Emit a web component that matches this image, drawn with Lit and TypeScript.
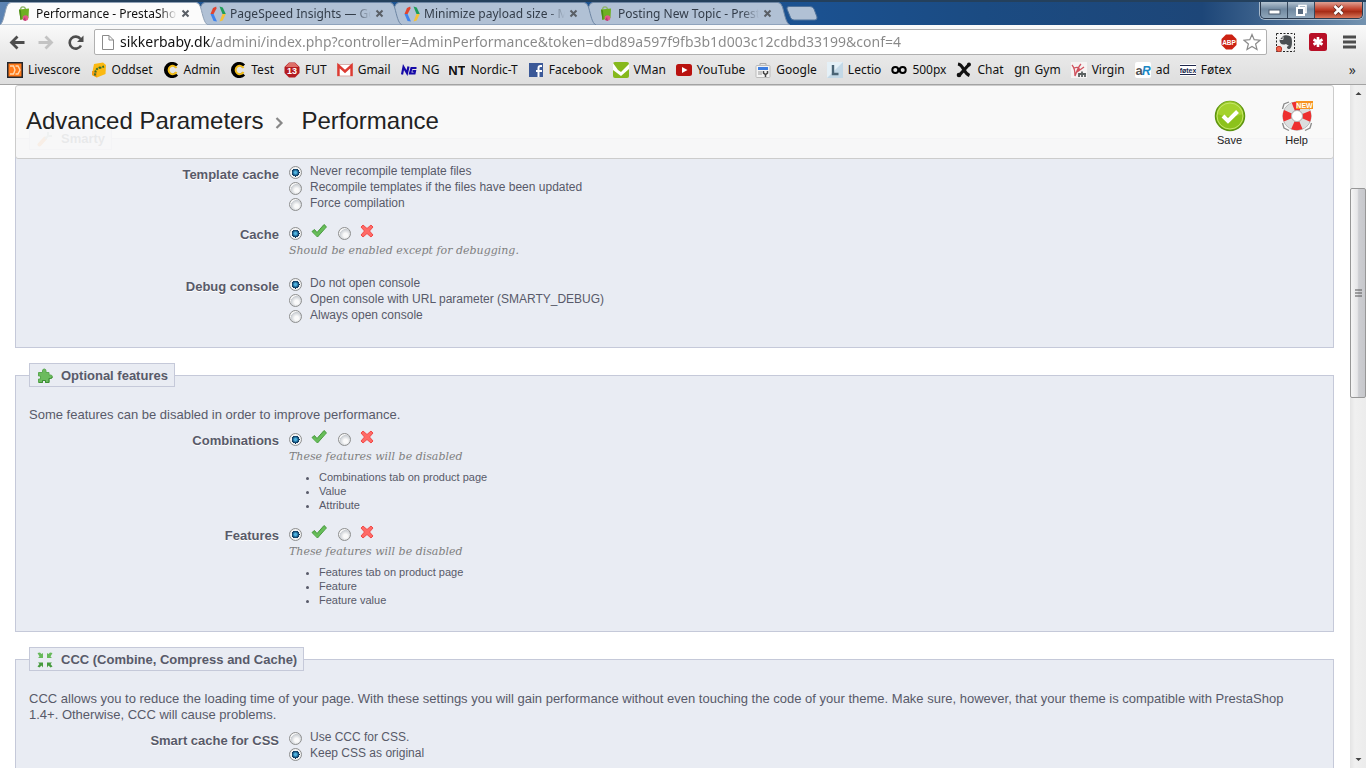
import { LitElement, html, css, svg, nothing, TemplateResult } from "lit";
import { customElement, property } from "lit/decorators.js";

const icon = (body: unknown, w = 16, h = 16, cls = "") =>
  html`<svg class=${cls} width=${w} height=${h} viewBox="0 0 ${w} ${h}" aria-hidden="true">${body}</svg>`;

const presta = svg`
  <path d="M4.500 4 C4.500 0 9 0 9.500 3.500" fill="none" stroke="#8db36a" stroke-width="1.300"/>
  <path d="M3 3.500 L13 2.500 L12.500 12 L8 13 L4.500 14 Z" fill="#6fb022"/>
  <path d="M3 3.500 L5 4.500 L5.500 13 L4.500 14 Z" fill="#4b8a17"/>
  <circle cx="9.500" cy="12" r="2.800" fill="#e05a8a"/><path d="M9 11 L7 14 L10 15Z" fill="#b83a72"/>`;
const dev = svg`
  <path d="M6.200 0.500 L3 2 L0.500 8 L3.600 8 L6.500 2.500Z" fill="#e0432f"/>
  <path d="M0.500 8 L3.600 15 L7 15.500 L3.600 8Z" fill="#3f83ec"/>
  <path d="M9.500 0.500 L12.700 1.500 L15.800 8 L12.500 8Z" fill="#1f9d59"/>
  <path d="M15.800 8 L12.700 14.500 L9.500 15.500 L12.500 8Z" fill="#f3c13a"/>`;
const smallCross = svg`<path d="M1.500 1.500 L7.500 7.500 M7.500 1.500 L1.500 7.500" stroke="#5a5f66" stroke-width="2" fill="none"/>`;
const letterC = svg`
  <path d="M13.500 4 A6 6 0 1 0 13.500 12" fill="none" stroke="#000" stroke-width="4.200"/>
  <path d="M13.500 6 A4.200 4.200 0 1 0 13.500 10" fill="none" stroke="#f2bd18" stroke-width="2"/>`;

interface Bookmark { name: string; art: TemplateResult | unknown }
const bookmarks: Bookmark[] = [
  { name: "Livescore", art: svg`<rect width="16" height="16" fill="#23272e"/><rect x="1.500" y="1.500" width="13" height="13" fill="#ff7a1a"/><path d="M3 4 H6.500 L8 8 L6.500 12 H3 M8.500 4 H11 L13 8 L11 12 H8.500" fill="none" stroke="#ffd9b0" stroke-width="1.400"/>` },
  { name: "Oddset", art: svg`<path d="M3 2 L12 0.500 L15 3 L14.500 12 L6 15.500 L1 13 L2 7Z" fill="#fbb911"/><path d="M1 9 L6 9 L6 15.500 L1 13Z" fill="#f39c12"/><path d="M4 13.500 C4 8 6 6 9 5.500 M8.500 6 L13 4.500" stroke="#37702d" stroke-width="2" stroke-dasharray="2 1" fill="none"/>` },
  { name: "Admin", art: letterC },
  { name: "Test", art: letterC },
  { name: "FUT", art: svg`<path d="M5 0.500 H11 L15.500 5 V11 L11 15.500 H5 L0.500 11 V5Z" fill="#b51c20"/><path d="M5 1 H11 L14.500 5 H1.500Z" fill="#de6f68"/><text x="8" y="11.500" font-size="9" font-weight="700" text-anchor="middle" fill="#fff">13</text>` },
  { name: "Gmail", art: svg`<rect x="0.500" y="2.500" width="15" height="11.500" fill="#fff" stroke="#d9b0ac"/><path d="M1.500 14 V3.500 L8 9.500 L14.500 3.500 V14" fill="none" stroke="#dd3b32" stroke-width="2.400"/>` },
  { name: "NG", art: svg`<path d="M1 12.500 L2.500 5 L6 11 L7.500 4.500 M15.500 6 H10.500 L9 11.500 H13.500 L14 9 H11.500" fill="none" stroke="#160aa8" stroke-width="2.200"/>` },
  { name: "Nordic-T", art: svg`<text x="8" y="13" font-size="13" font-weight="700" text-anchor="middle" fill="#111">NT</text>` },
  { name: "Facebook", art: svg`<rect x="1" y="1" width="14" height="14" fill="#3b5998"/><path d="M14 4 H12.500 Q10.500 4 10.500 6 V15 M8 9 H14" fill="none" stroke="#fff" stroke-width="2"/>` },
  { name: "VMan", art: svg`<rect width="16" height="16" rx="2" fill="#86b91c"/><path d="M0 1 L5 8 L8 10 L16 2 V7 L8 14 L0 8Z" fill="#fff"/>` },
  { name: "YouTube", art: svg`<rect y="2" width="16" height="12" rx="2.500" fill="#b9120f"/><path d="M6 5 L11.500 8 L6 11Z" fill="#fff"/>` },
  { name: "Google", art: svg`<path d="M5 4 V1.500 H11 V4" fill="none" stroke="#aaa"/><rect x="1" y="3.500" width="14" height="12" rx="1" fill="#f4f4f4" stroke="#bbb"/><rect x="3" y="5" width="10" height="3" fill="#3c7de0"/><path d="M3 10 H7 M3 12 H7" stroke="#999"/><path d="M8.500 9 V11 L10.500 12.500 L12.500 11 V9 M10.500 12 V15" stroke="#444" stroke-width="1.500" fill="none"/>` },
  { name: "Lectio", art: svg`<rect width="16" height="16" fill="#c3d8e6"/><path d="M0 0 H16 L0 16Z" fill="#e4f0f7"/><path d="M6 3 V12 H11.500" fill="none" stroke="#4a6475" stroke-width="2.400"/>` },
  { name: "500px", art: svg`<circle cx="4.300" cy="8" r="3" fill="none" stroke="#000" stroke-width="2"/><circle cx="11.700" cy="8" r="3" fill="none" stroke="#000" stroke-width="2"/>` },
  { name: "Chat", art: svg`<path d="M2 2 C8 3 7 11 13.500 13.500 M13 2.500 L8 8 L3 13.500" fill="none" stroke="#111" stroke-width="3.200"/><circle cx="13" cy="2.500" r="2" fill="#111"/><circle cx="3" cy="13" r="2.300" fill="#111"/>` },
  { name: "Gym", art: svg`<text x="8" y="11.500" font-size="14" text-anchor="middle" fill="#222">gn</text>` },
  { name: "Virgin", art: svg`<rect width="16" height="16" fill="#f5f2f2"/><path d="M1 3 C4 6 4 10 4 14 C6 9 7 5 10 2 M3 6 C8 4 10 7 6 10 L13 5" fill="none" stroke="#d0525e" stroke-width="1.300"/><path d="M8 15 V11 M11 15 V9.500 M14 15 V11 M8 12 H15" stroke="#5b6060" stroke-width="1.800"/>` },
  { name: "ad", art: svg`<rect width="16" height="16" rx="2" fill="#fff"/><text x="0.500" y="13" font-size="13" font-weight="700" fill="#555">a</text><text x="7" y="13" font-size="12" font-weight="700" font-style="italic" fill="#1a87c4">R</text>` },
  { name: "Føtex", art: svg`<rect y="2" width="16" height="12" fill="#fff"/><path d="M0 3.500 H16 M0 12.500 H16" stroke="#20284c"/><text x="8" y="10.500" font-size="7" font-weight="700" text-anchor="middle" fill="#20284c">føtex</text>` },
];

const tabs = [
  { title: "Performance - PrestaShop", art: presta },
  { title: "PageSpeed Insights — Google", art: dev },
  { title: "Minimize payload size - Make", art: dev },
  { title: "Posting New Topic - PrestaShop", art: presta },
];

const tick = svg`<path d="M1 8.500 L3.500 6.500 L6 9.500 L13 1.500 L15.500 3.800 L6.500 14Z" fill="#5fb84f" stroke="#4a9a42" stroke-width="1"/><path d="M3 9 L6 12 L14 3.500" fill="none" stroke="#68bd5a" stroke-width="2"/>`;
const cross = svg`<path d="M1 3 L3 1 L7 4.500 L11 1 L13 3 L9.500 7 L13 11 L11 13 L7 9.500 L3 13 L1 11 L4.500 7Z" fill="#ff6a66" stroke="#f04a48"/>`;
const wrench = svg`<path d="M2.500 13.500 L8 7.500" stroke="#f08a3c" stroke-width="4" stroke-linecap="round"/><path d="M8 8 L12 4 M11 1 L11 5 L15 5" fill="none" stroke="#9aa" stroke-width="2"/>`;
const puzzle = svg`<path d="M1.500 4.500 H5.500 V3 Q5.500 1 7.300 1 Q9 1 9 3 V4.500 H12 V7 H13.500 Q15.300 7 15.300 8.800 Q15.300 10.500 13.500 10.500 H12 V14.500 H8.500 V12.500 H5.500 V14.500 H1.500 V11 H3.500 V8 H1.500Z" fill="#6cbb5e" stroke="#5aa850" stroke-width="1"/><path d="M2 14.500 H5.500 V12.500 H8.500 V14.500 H12 V10.500 H13.500 Q15 10.500 15.300 8.800" fill="none" stroke="#3d8f35"/>`;
const compress = svg`<path d="M0.500 1 L3 0.500 L4.500 2 L6 1 V6 H1 L2.500 4.500Z M15.500 1 L13 0.500 L11.500 2 L10 1 V6 H15 L13.500 4.500Z" fill="#67b95a"/><path d="M0.500 14.500 L2.500 12 L1 10.500 H6 V15.500 L4.500 13.500 L2.500 15.500Z M15.500 14.500 L13.500 12 L15 10.500 H10 V15.500 L11.500 13.500 L13.500 15.500Z" fill="#459a3c"/>`;

@customElement("browser-tabs")
export class BrowserTabs extends LitElement {
  static styles = css`
    :host { display: flex; justify-content: space-between; height: 25px; box-sizing: border-box;
      border-top: 2px solid #24405c; overflow: hidden; flex: none;
      font: 12px/16px "Noto Sans", "Open Sans", sans-serif;
      background: linear-gradient(90deg, #5d84b3 0, #1f5694 10%, #1b5190 60%, #1b4b82 72%, #1d4678 88%, #7493b0 100%); }
    .tabs { display: flex; }
    .tab { position: relative; display: flex; align-items: center; width: 208px; height: 23px; margin-right: -14px;
      box-sizing: border-box; padding: 0 15px 0 16px; z-index: 1; }
    .tab:nth-child(1) { z-index: 4; }
    .tab:nth-child(2) { z-index: 3; }
    .tab:nth-child(3) { z-index: 2; }
    .shape { position: absolute; inset: 0; width: 100%; height: 100%; }
    .pick, .close, .new, .ctl { border: 0; padding: 0; background: none; font: inherit; color: #333d4a; }
    .pick { position: relative; display: flex; align-items: center; gap: 4px; flex: 1; min-width: 0; }
    .pick svg { flex: none; }
    .name { flex: 1; text-align: left; white-space: nowrap; overflow: hidden;
      -webkit-mask-image: linear-gradient(90deg, #000 88%, transparent); mask-image: linear-gradient(90deg, #000 88%, transparent); }
    .on .name { color: #111; }
    .close { position: relative; width: 16px; height: 16px; display: grid; place-items: center; }
    .new { margin: 4px 0 0 16px; width: 32px; height: 15px; margin-left: 10px; }
    .new svg, .close svg, .ctl svg { display: block; }
    .win { display: flex; height: 16px; margin-right: 3px; border: 1px solid #2b3a4e; border-top: 0;
      border-radius: 0 0 5px 5px; overflow: hidden; box-shadow: 0 0 0 1px #a9bacb; }
    .ctl { display: grid; place-items: center; width: 27px; background: linear-gradient(#b4c3d1, #7088a0 45%, #8fa6ba); border-right: 1px solid #35475c; }
    .ctl.x { width: 47px; border: 0; background: linear-gradient(#e0a193, #c2412c 45%, #a52c16 60%, #d9765a); }
  `;
  render() {
    return html`
      <div class="tabs">
        ${tabs.map((t, i) => html`
          <div class="tab ${i === 0 ? "on" : ""}">
            <svg class="shape" viewBox="0 0 208 23" preserveAspectRatio="none" aria-hidden="true">
              <path d="M0 23 C3 21 4 14 6.500 5 Q8 0.500 11 0.500 H196 Q199 0.500 200.500 5 C203 14 204 21 208 23Z"
                fill=${i === 0 ? "#fbfbfb" : "#b1c1d5"} stroke=${i === 0 ? "#8fa0b5" : "#6d85a3"}></path>
            </svg>
            <button class="pick">${icon(t.art)}<span class="name">${t.title}</span></button>
            <button class="close" aria-label="Close tab">${icon(smallCross, 9, 9)}</button>
          </div>`)}
        <button class="new" aria-label="New tab">
          ${icon(svg`<path d="M3 0.500 H24 Q27 0.500 28 3 L31 11 Q31.500 14 29 14 H8 Q5.500 14 4.500 11.500 L1 3 Q0.500 0.500 3 0.500Z" fill="#b1c1d5" stroke="#4f729b"/>`, 32, 15)}
        </button>
      </div>
      <div class="win">
        <button class="ctl" aria-label="Minimize">${icon(svg`<rect x="1" y="6" width="11" height="4" fill="#fff" stroke="#4a5b6e"/>`, 13, 13)}</button>
        <button class="ctl" aria-label="Restore">${icon(svg`<rect x="4" y="1.500" width="7" height="7" fill="none" stroke="#fff" stroke-width="1.600"/><rect x="2" y="4" width="7" height="7" fill="#596b80" stroke="#fff" stroke-width="2"/>`, 13, 13)}</button>
        <button class="ctl x" aria-label="Close">${icon(svg`<path d="M2.500 2 L10.500 10 M10.500 2 L2.500 10" stroke="#5b2a22" stroke-width="4"/><path d="M2.500 2 L10.500 10 M10.500 2 L2.500 10" stroke="#fff" stroke-width="2.500"/>`, 13, 12)}</button>
      </div>`;
  }
}

@customElement("browser-bar")
export class BrowserBar extends LitElement {
  static styles = css`
    :host { display: block; flex: none; border-bottom: 1px solid #a3a3a3;
      font: 12px/16px "Noto Sans", "Open Sans", sans-serif; background: linear-gradient(#fafafa, #e9e9e9 50%, #dedede); }
    button { border: 0; padding: 0; background: none; display: block; }
    svg { display: block; flex: none; }
    .nav { display: flex; align-items: center; padding: 4px 10px 0 9px; height: 26px; }
    .back { margin-right: 12px; }
    .fwd { margin-right: 13px; }
    .reload { margin-right: 10px; }
    .omni { display: flex; align-items: center; flex: 1; height: 24px; border: 1px solid #b0b0b0; border-radius: 2px; background: #fff; padding: 0 5px 0 6px; }
    .url { flex: 1; min-width: 0; margin-left: 5px; border: 0; padding: 0; outline: 0; height: 22px; font: 14px/22px "Noto Sans", "Open Sans", sans-serif;
      background: linear-gradient(90deg, #111 91px, #888 91px); -webkit-background-clip: text; background-clip: text;
      -webkit-text-fill-color: transparent; }
    .star { margin-left: 6px; }
    .ext { display: flex; align-items: center; margin-left: 9px; }
    .ext button + button { margin-left: 14px; }
    .ext button.menu { margin-left: 16px; }
    .marks { display: flex; align-items: center; height: 29px; padding: 0 10px 0 7px; gap: 10px; }
    .mark { display: flex; align-items: center; gap: 5px; color: #111; text-decoration: none; white-space: nowrap; }
    .mark svg { font-family: "Liberation Sans", sans-serif; }
    .more { margin-left: auto; font: 14px/16px "Noto Sans", sans-serif; color: #333; }
  `;
  render() {
    return html`
      <div class="nav">
        <button class="back" aria-label="Back">${icon(svg`<path d="M15.500 7.500 H3 M8.500 1.500 L2.500 7.500 L8.500 13.500" fill="none" stroke="#4d4d4d" stroke-width="2.800"/>`, 17, 15)}</button>
        <button class="fwd" aria-label="Forward">${icon(svg`<path d="M0.500 7.500 H13 M7.500 1.500 L13.500 7.500 L7.500 13.500" fill="none" stroke="#c3c3c3" stroke-width="2.800"/>`, 17, 15)}</button>
        <button class="reload" aria-label="Reload">${icon(svg`<path d="M12.500 4 A6 6 0 1 0 13 10.500" fill="none" stroke="#4d4d4d" stroke-width="2.600"/><path d="M15.500 0.500 V7 H9Z" fill="#4d4d4d"/>`, 16, 15)}</button>
        <div class="omni">
          ${icon(svg`<path d="M1.500 0.500 H8 L12.500 5 V14.500 H1.500Z M8 0.500 V5 H12.500" fill="#fff" stroke="#8a8a8a"/>`, 14, 15)}
          <input class="url" aria-label="Address" value="sikkerbaby.dk/admini/index.php?controller=AdminPerformance&token=dbd89a597f9fb3b1d003c12cdbd33199&conf=4">
          <button aria-label="Adblock">${icon(svg`<path d="M5 0.500 H11 L15.500 5 V11 L11 15.500 H5 L0.500 11 V5Z" fill="#cc2213"/><text x="8" y="10.800" font-family="Liberation Sans" font-size="6.500" font-weight="700" text-anchor="middle" fill="#fff">ABP</text>`)}</button>
          <button class="star" aria-label="Bookmark this page">${icon(svg`<path d="M9 1.500 L11.200 6.700 L17 7.200 L12.600 11 L14 16.500 L9 13.500 L4 16.500 L5.400 11 L1 7.200 L6.800 6.700Z" fill="#fff" stroke="#8a8a8a" stroke-width="1.200"/>`, 18, 18)}</button>
        </div>
        <div class="ext">
          <button aria-label="Clipper">${icon(svg`<rect x="0.500" y="0.500" width="18" height="18" fill="none" stroke="#222" stroke-dasharray="2 1.500"/><path d="M3.500 7 L7 3 C9 1.500 15 2 15.500 5 C16.500 9 16 15 13.500 16 C10 16 10.500 12.500 13 13 L10 11 C6 12.500 3.500 10.500 3.500 7Z" fill="#4b4f52"/><path d="M4 6.500 H7 V3.500" stroke="#ddd" fill="none"/><circle cx="3" cy="16" r="2.700" fill="#f0624a" stroke="#b8392a"/>`, 19, 19)}</button>
          <button aria-label="Passwords">${icon(svg`<rect width="18" height="18" rx="2.500" fill="#b80f26"/><path d="M9 4 V14 M4.500 6.500 L13.500 11.500 M13.500 6.500 L4.500 11.500" stroke="#fff" stroke-width="2.600"/>`, 18, 18)}</button>
          <button class="menu" aria-label="Menu">${icon(svg`<path d="M0 2 H13 M0 7 H13 M0 12 H13" stroke="#4d4d4d" stroke-width="3"/>`, 13, 14)}</button>
        </div>
      </div>
      <div class="marks">
        ${bookmarks.map((b) => html`<a class="mark" href="#">${icon(b.art)}<span>${b.name}</span></a>`)}
        <button class="more" aria-label="More bookmarks">»</button>
      </div>`;
  }
}

interface Setting {
  id: string; label: string; options?: string[]; picked?: number; hint?: string; list?: string[];
}

@customElement("settings-group")
export class SettingsGroup extends LitElement {
  @property() heading = "";
  @property() intro = "";
  @property({ attribute: false }) art: unknown = nothing;
  @property({ attribute: false }) rows: Setting[] = [];
  static styles = css`
    :host { display: block; margin-bottom: 15px; }
    .box { margin: 0; min-width: 0; border: 1px solid #c5c9d9; background: #e9ecf3; padding: 13px 13px 24px; }
    .head { display: flex; align-items: center; gap: 8px; box-sizing: border-box; height: 24px; padding: 1px 6px 0 7px;
      border: 1px solid #c5c9d9; background: #e9ecf3; font-weight: 700; font-size: 13px; }
    .head svg { flex: none; }
    .intro { margin: 7px 20px 6px 0; font-size: 13px; line-height: 16px; }
    .row { display: grid; grid-template-columns: 250px 1fr; column-gap: 10px; }
    .row + .row { margin-top: 12px; }
    .title { padding-top: 4px; text-align: right; font-weight: 700; font-size: 13px; line-height: 16px; text-shadow: 0 1px 0 #fff; }
    .opt { display: flex; align-items: flex-end; gap: 8px; width: max-content; height: 16px; }
    .opt span { line-height: 16px; }
    .switch { display: flex; gap: 11px; height: 18px; }
    .yn { display: flex; align-items: center; gap: 9px; }
    .yn svg { margin-bottom: 3px; }
    .radio { appearance: none; flex: none; margin: 0; width: 13px; height: 13px; box-sizing: border-box; border-radius: 50%;
      border: 1px solid #8e8f8f; background: radial-gradient(circle at 60% 65%, #fafafa 20%, #c9cdd2 60%, #f6f6f6 64%); }
    .radio:checked { background: radial-gradient(circle at 50% 50%, #4fb4e0 0 1px, #124a75 3px, #0b2e4c 4px, #f2f2f2 4px); }
    .switch .radio { margin-top: 2px; }
    .hint { margin: 2px 0 0; padding-bottom: 4px; font: italic 11px/16px Georgia, "DejaVu Serif", serif; color: #7f7f7f; }
    .list { margin: 1px 0 0; padding-left: 30px; font-size: 11px; line-height: 14px; }
  `;
  private control(s: Setting) {
    if (s.options)
      return html`${s.options.map((o, i) => html`
        <label class="opt"><input class="radio" type="radio" id="${s.id}${i}" name=${s.id} ?checked=${i === s.picked}><span>${o}</span></label>`)}`;
    return html`<div class="switch">
      <label class="yn"><input class="radio" type="radio" id="${s.id}0" name=${s.id} aria-label="Enabled" checked>${icon(tick)}</label>
      <label class="yn"><input class="radio" type="radio" id="${s.id}1" name=${s.id} aria-label="Disabled">${icon(cross, 14, 14)}</label>
    </div>`;
  }
  render() {
    return html`<fieldset class="box">
      <legend class="head">${icon(this.art)}<span>${this.heading}</span></legend>
      ${this.intro ? html`<p class="intro">${this.intro}</p>` : nothing}
      ${this.rows.map((s) => html`<div class="row">
        <label class="title" for="${s.id}0">${s.label}</label>
        <div>
          ${this.control(s)}
          ${s.hint ? html`<p class="hint">${s.hint}</p>` : nothing}
          ${s.list ? html`<ul class="list">${s.list.map((l) => html`<li>${l}</li>`)}</ul>` : nothing}
        </div>
      </div>`)}
    </fieldset>`;
  }
}

const smarty: Setting[] = [
  { id: "tpl", label: "Template cache", picked: 0, options: ["Never recompile template files", "Recompile templates if the files have been updated", "Force compilation"] },
  { id: "cache", label: "Cache", hint: "Should be enabled except for debugging." },
  { id: "console", label: "Debug console", picked: 0, options: ["Do not open console", "Open console with URL parameter (SMARTY_DEBUG)", "Always open console"] },
];
const features: Setting[] = [
  { id: "comb", label: "Combinations", hint: "These features will be disabled", list: ["Combinations tab on product page", "Value", "Attribute"] },
  { id: "feat", label: "Features", hint: "These features will be disabled", list: ["Features tab on product page", "Feature", "Feature value"] },
];
const ccc: Setting[] = [
  { id: "css", label: "Smart cache for CSS", picked: 1, options: ["Use CCC for CSS.", "Keep CSS as original"] },
];

@customElement("app-root")
export class AppRoot extends LitElement {
  static styles = css`
    :host { display: flex; flex-direction: column; height: 100vh; overflow: hidden; background: #fff; color: #585a69;
      font: 12px/16px "Liberation Sans", Arial, sans-serif; }
    .view { display: flex; flex: 1; min-height: 0; }
    .page { position: relative; flex: 1; min-width: 0; overflow: hidden; padding: 41px 16px 0 15px; }
    .bar { position: absolute; top: 0; left: 15px; right: 16px; height: 74px; box-sizing: border-box; display: flex; justify-content: space-between;
      padding: 14px 20px 0 10px; border: 1px solid #ccc; border-radius: 3px; background: rgba(248, 248, 248, 0.9); z-index: 1; }
    .crumbs { display: flex; align-items: center; height: 42px; margin: 0; font-size: 24px; line-height: 28px; font-weight: 400; color: #222; white-space: nowrap; }
    .crumbs svg { margin: 4px 17px 0 12px; }
    .tools { display: flex; gap: 34px; }
    .tool { display: flex; flex-direction: column; align-items: center; gap: 1px; width: 33px; border: 0; padding: 0; background: none; font: 11px/14px "Liberation Sans", sans-serif; color: #222; }
    .tool svg { display: block; }
    .scroll { width: 16px; flex: none; display: flex; flex-direction: column; box-sizing: border-box; background: linear-gradient(90deg, #e4e4e4, #f0f0f0 30%, #ececec); }
    .arrow { height: 17px; display: grid; place-items: center; flex: none; }
    .over { flex: 86; }
    .thumb { flex: 208; display: grid; place-items: center; box-sizing: border-box; border: 1px solid #979797; border-radius: 2px; background: linear-gradient(90deg, #f5f5f5, #e6e6e8 45%, #cdced2 55%, #c6c7cb); }
    .under { flex: 353; }
  `;
  render() {
    return html`
      <browser-tabs></browser-tabs>
      <browser-bar></browser-bar>
      <div class="view">
        <main class="page">
          <header class="bar">
            <h1 class="crumbs">Advanced Parameters${icon(svg`<path d="M1.500 1 L6.500 6 L1.500 11" fill="none" stroke="#888" stroke-width="2.200"/>`, 9, 12)}Performance</h1>
            <div class="tools">
              <button class="tool">${icon(svg`<circle cx="16" cy="16" r="14.500" fill="#8cc21b" stroke="#5d9410" stroke-width="1.500"/><path d="M3 14 A13 13 0 0 1 29 14 Q16 19 3 14Z" fill="#b4dc3a" opacity=".6"/><circle cx="16" cy="16" r="13" fill="none" stroke="#c6e66a" stroke-width="1"/><path d="M9 16 L14 21 L23.500 11.500" fill="none" stroke="#fff" stroke-width="4"/>`, 32, 32)}Save</button>
              <button class="tool">${icon(svg`
                <path d="M1.500 9 L3 4 L8 2 M24 2 L29 4 L30.500 9 M1.500 23 L3 28 L8 30.500 M24 30.500 L29 28 L30.500 23" fill="none" stroke="#8a8a8a" stroke-width="1.300"/>
                <circle cx="16" cy="16" r="10" fill="none" stroke="#9f9f9f" stroke-width="9"/>
                <circle cx="16" cy="16" r="10" fill="none" stroke="#dcdede" stroke-width="8"/>
                <circle cx="16" cy="16" r="10" fill="none" stroke="#ee3030" stroke-width="8.500" stroke-dasharray="8.200 7.508" stroke-dashoffset="4.100"/>
                <circle cx="16" cy="16" r="5.500" fill="#fff" stroke="#a9a9a9" stroke-width="0.800"/>
                <rect x="15" y="1" width="17" height="8" fill="#f79321"/><text x="23.500" y="7.800" font-size="7" font-weight="700" text-anchor="middle" fill="#fff">NEW</text>`, 32, 32)}Help</button>
            </div>
          </header>
          <settings-group heading="Smarty" .art=${wrench} .rows=${smarty}></settings-group>
          <settings-group heading="Optional features" .art=${puzzle} .rows=${features}
            intro="Some features can be disabled in order to improve performance."></settings-group>
          <settings-group heading="CCC (Combine, Compress and Cache)" .art=${compress} .rows=${ccc}
            intro="CCC allows you to reduce the loading time of your page. With these settings you will gain performance without even touching the code of your theme. Make sure, however, that your theme is compatible with PrestaShop 1.4+. Otherwise, CCC will cause problems."></settings-group>
        </main>
        <div class="scroll" aria-hidden="true">
          <div class="arrow">${icon(svg`<path d="M0.500 4 L3.500 1 L6.500 4Z" fill="#444"/>`, 7, 5)}</div>
          <div class="over"></div>
          <div class="thumb">${icon(svg`<path d="M0 1 H7 M0 4 H7 M0 7 H7" stroke="#555"/>`, 7, 8)}</div>
          <div class="under"></div>
          <div class="arrow">${icon(svg`<path d="M0.500 1 L3.500 4 L6.500 1Z" fill="#444"/>`, 7, 5)}</div>
        </div>
      </div>`;
  }
}
